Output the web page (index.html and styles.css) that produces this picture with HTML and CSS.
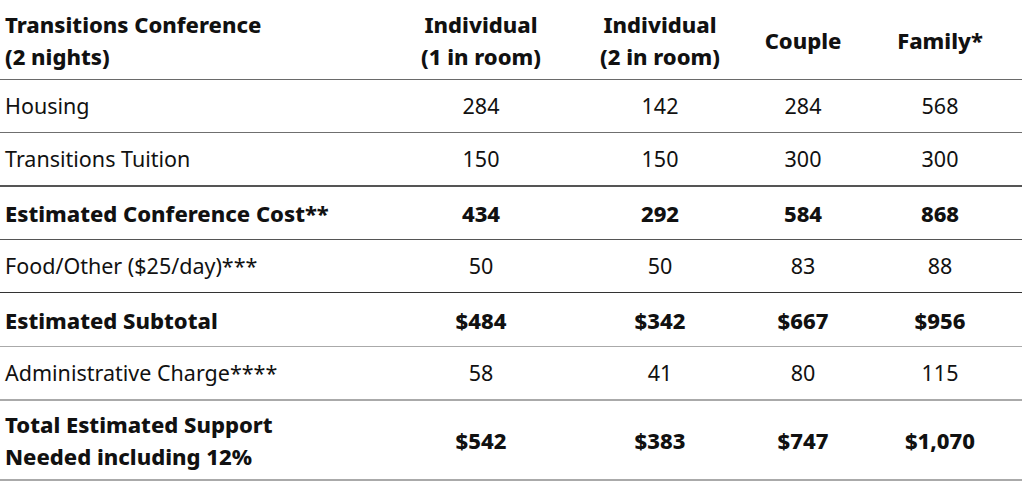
FILE: index.html
```html
<!DOCTYPE html>
<html>
<head>
<meta charset="utf-8">
<link rel="stylesheet" href="styles.css">
</head>
<body>
<table class="cost">
  <colgroup>
    <col class="c1"><col class="c2"><col class="c3"><col class="c4"><col class="c5">
  </colgroup>
  <thead>
    <tr class="head">
      <th class="label">Transitions Conference<br>(2 nights)</th>
      <th>Individual<br>(1 in room)</th>
      <th>Individual<br>(2 in room)</th>
      <th>Couple</th>
      <th>Family*</th>
    </tr>
  </thead>
  <tbody>
    <tr class="r1"><td class="label">Housing</td><td>284</td><td>142</td><td>284</td><td>568</td></tr>
    <tr class="r2"><td class="label">Transitions Tuition</td><td>150</td><td>150</td><td>300</td><td>300</td></tr>
    <tr class="r3 bold"><td class="label">Estimated Conference Cost**</td><td>434</td><td>292</td><td>584</td><td>868</td></tr>
    <tr class="r4"><td class="label">Food/Other ($25/day)***</td><td>50</td><td>50</td><td>83</td><td>88</td></tr>
    <tr class="r5 bold"><td class="label">Estimated Subtotal</td><td>$484</td><td>$342</td><td>$667</td><td>$956</td></tr>
    <tr class="r6"><td class="label">Administrative Charge****</td><td>58</td><td>41</td><td>80</td><td>115</td></tr>
    <tr class="r7 bold"><td class="label">Total Estimated Support<br>Needed including 12%</td><td>$542</td><td>$383</td><td>$747</td><td>$1,070</td></tr>
  </tbody>
</table>
</body>
</html>
```
FILE: styles.css
```css
html, body {
  margin: 0;
  padding: 0;
  background: #fff;
}
.cost {
  border-collapse: collapse;
  table-layout: fixed;
  width: 1022px;
  font-family: "Noto Sans", "Liberation Sans", sans-serif;
  font-size: 21.5px;
  color: #111;
}
.c1 { width: 390px; }
.c2 { width: 182px; }
.c3 { width: 176px; }
.c4 { width: 110px; }
.c5 { width: 164px; }
.cost th, .cost td {
  padding: 0;
  text-align: center;
  vertical-align: middle;
  line-height: 32px;
}
.cost th, .bold td {
  font-weight: 800;
  font-size: 22px;
}
.cost .label { text-align: left; padding-left: 5px; }
.head th { height: 79px; border-bottom: 1px solid #6a6a6a; }
.r1 td { height: 52px; border-bottom: 1px solid #6f6f6f; }
.r2 td { height: 52px; border-bottom: 2px solid #555; }
.r3 td { height: 52px; border-bottom: 1px solid #555; }
.r4 td { height: 52px; border-bottom: 1px solid #333; }
.r5 td { height: 53px; border-bottom: 1px solid #aaa; }
.r6 td { height: 52px; border-bottom: 2px solid #aaa; }
.r7 td { height: 78px; border-bottom: 2px solid #aaa; }
```
